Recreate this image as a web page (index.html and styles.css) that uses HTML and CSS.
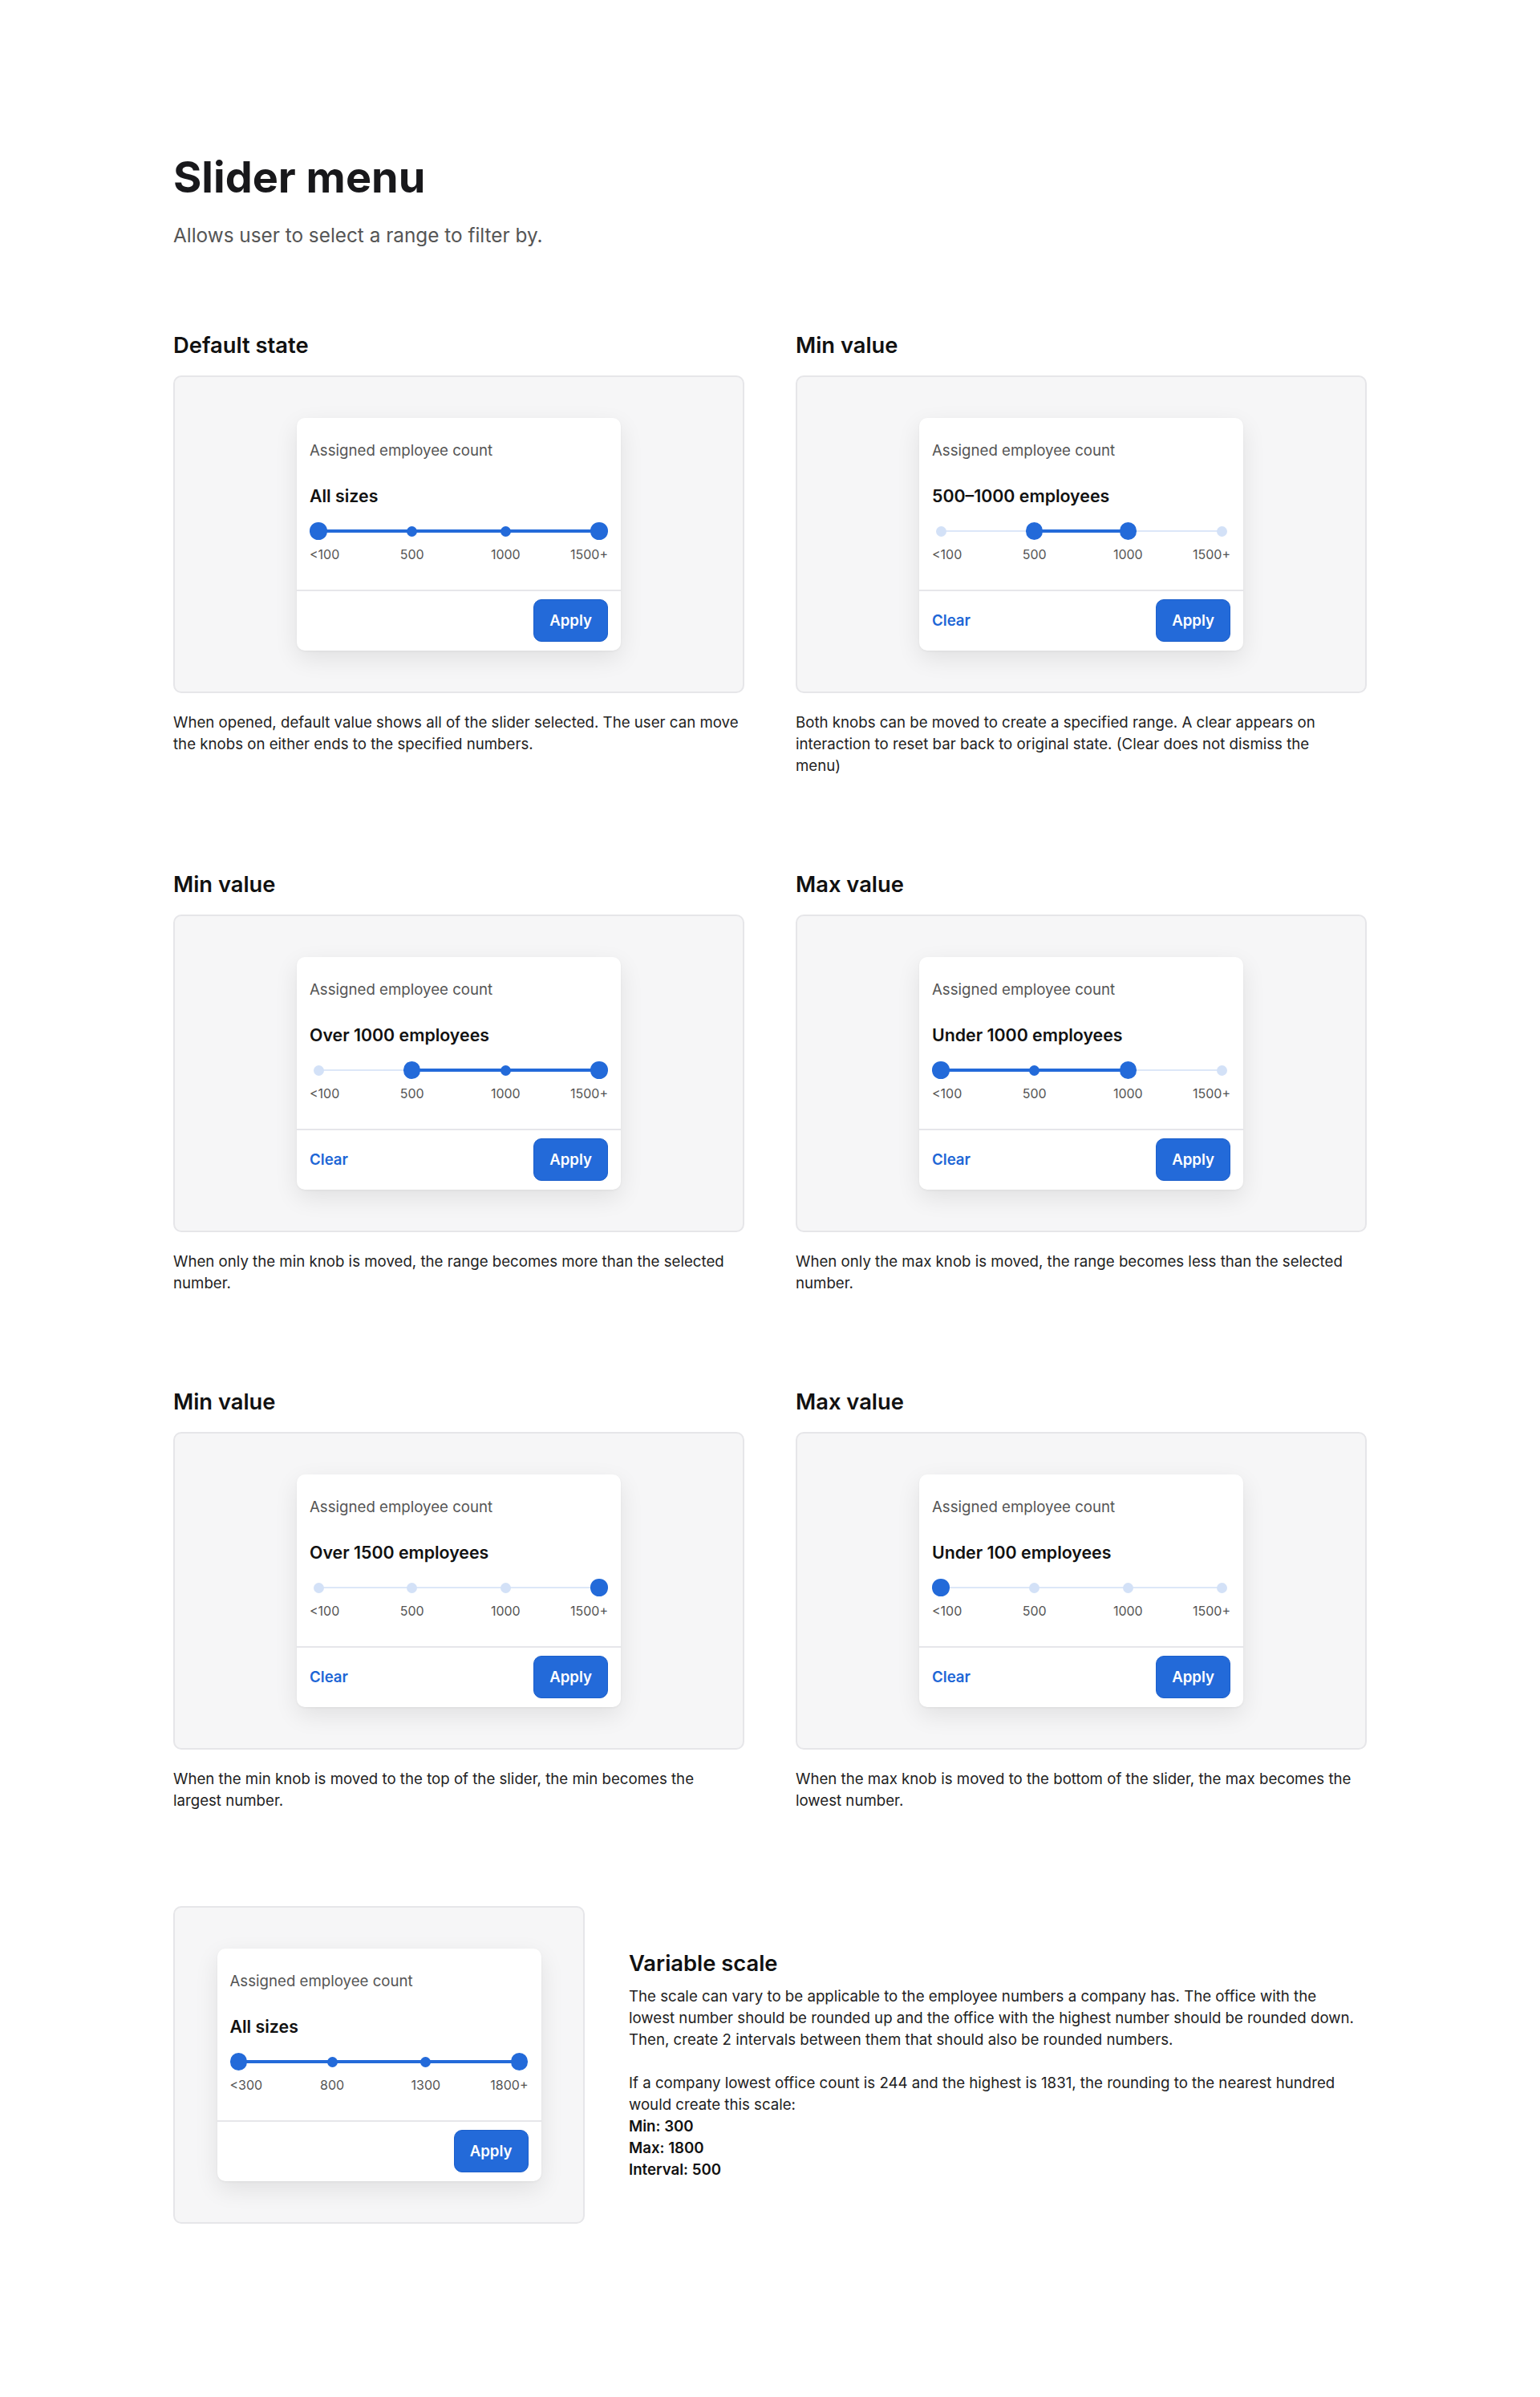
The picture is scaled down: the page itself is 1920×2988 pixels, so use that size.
FILE: index.html
```html
<!DOCTYPE html>
<html lang="en">
<head>
    <meta charset="UTF-8">
    <meta name="viewport" content="width=device-width, initial-scale=1.0">
    <title>Slider menu</title>
    <link rel="stylesheet" href="styles.css">
</head>
<body>
    <div class="page">
        <header class="intro">
            <h1>Slider menu</h1>
            <p class="subtitle">Allows user to select a range to filter by.</p>
        </header>

        <div class="states">
            <!-- Default -->
            <section class="state">
                <h2>Default state</h2>
                <div class="stage">
                    <div class="menu">
                        <div class="menu-body">
                            <p class="menu-label">Assigned employee count</p>
                            <p class="menu-value">All sizes</p>
                            <div class="slider">
                                <span class="stop"><i class="knob"></i></span>
                                <span class="seg on"></span>
                                <span class="stop"><i class="dot"></i></span>
                                <span class="seg on"></span>
                                <span class="stop"><i class="dot"></i></span>
                                <span class="seg on"></span>
                                <span class="stop"><i class="knob"></i></span>
                            </div>
                            <div class="ticks"><span>&lt;100</span><span>500</span><span>1000</span><span>1500+</span></div>
                        </div>
                        <div class="menu-foot">
                            <button class="apply">Apply</button>
                        </div>
                    </div>
                </div>
                <p class="note">When opened, default value shows all of the slider selected. The user can move the knobs on either ends to the specified numbers.</p>
            </section>

            <!-- Range -->
            <section class="state">
                <h2>Min value</h2>
                <div class="stage">
                    <div class="menu">
                        <div class="menu-body">
                            <p class="menu-label">Assigned employee count</p>
                            <p class="menu-value">500–1000 employees</p>
                            <div class="slider">
                                <span class="stop"><i class="dot off"></i></span>
                                <span class="seg"></span>
                                <span class="stop"><i class="knob"></i></span>
                                <span class="seg on"></span>
                                <span class="stop"><i class="knob"></i></span>
                                <span class="seg"></span>
                                <span class="stop"><i class="dot off"></i></span>
                            </div>
                            <div class="ticks"><span>&lt;100</span><span>500</span><span>1000</span><span>1500+</span></div>
                        </div>
                        <div class="menu-foot">
                            <a class="clear" href="#">Clear</a>
                            <button class="apply">Apply</button>
                        </div>
                    </div>
                </div>
                <p class="note note-narrow">Both knobs can be moved to create a specified range. A clear appears on interaction to reset bar back to original state. (Clear does not dismiss the menu)</p>
            </section>

            <!-- Over 1000 -->
            <section class="state">
                <h2>Min value</h2>
                <div class="stage">
                    <div class="menu">
                        <div class="menu-body">
                            <p class="menu-label">Assigned employee count</p>
                            <p class="menu-value">Over 1000 employees</p>
                            <div class="slider">
                                <span class="stop"><i class="dot off"></i></span>
                                <span class="seg"></span>
                                <span class="stop"><i class="knob"></i></span>
                                <span class="seg on"></span>
                                <span class="stop"><i class="dot"></i></span>
                                <span class="seg on"></span>
                                <span class="stop"><i class="knob"></i></span>
                            </div>
                            <div class="ticks"><span>&lt;100</span><span>500</span><span>1000</span><span>1500+</span></div>
                        </div>
                        <div class="menu-foot">
                            <a class="clear" href="#">Clear</a>
                            <button class="apply">Apply</button>
                        </div>
                    </div>
                </div>
                <p class="note">When only the min knob is moved, the range becomes more than the selected number.</p>
            </section>

            <!-- Under 1000 -->
            <section class="state">
                <h2>Max value</h2>
                <div class="stage">
                    <div class="menu">
                        <div class="menu-body">
                            <p class="menu-label">Assigned employee count</p>
                            <p class="menu-value">Under 1000 employees</p>
                            <div class="slider">
                                <span class="stop"><i class="knob"></i></span>
                                <span class="seg on"></span>
                                <span class="stop"><i class="dot"></i></span>
                                <span class="seg on"></span>
                                <span class="stop"><i class="knob"></i></span>
                                <span class="seg"></span>
                                <span class="stop"><i class="dot off"></i></span>
                            </div>
                            <div class="ticks"><span>&lt;100</span><span>500</span><span>1000</span><span>1500+</span></div>
                        </div>
                        <div class="menu-foot">
                            <a class="clear" href="#">Clear</a>
                            <button class="apply">Apply</button>
                        </div>
                    </div>
                </div>
                <p class="note">When only the max knob is moved, the range becomes less than the selected number.</p>
            </section>

            <!-- Over 1500 -->
            <section class="state">
                <h2>Min value</h2>
                <div class="stage">
                    <div class="menu">
                        <div class="menu-body">
                            <p class="menu-label">Assigned employee count</p>
                            <p class="menu-value">Over 1500 employees</p>
                            <div class="slider">
                                <span class="stop"><i class="dot off"></i></span>
                                <span class="seg"></span>
                                <span class="stop"><i class="dot off"></i></span>
                                <span class="seg"></span>
                                <span class="stop"><i class="dot off"></i></span>
                                <span class="seg"></span>
                                <span class="stop"><i class="knob"></i></span>
                            </div>
                            <div class="ticks"><span>&lt;100</span><span>500</span><span>1000</span><span>1500+</span></div>
                        </div>
                        <div class="menu-foot">
                            <a class="clear" href="#">Clear</a>
                            <button class="apply">Apply</button>
                        </div>
                    </div>
                </div>
                <p class="note">When the min knob is moved to the top of the slider, the min becomes the largest number.</p>
            </section>

            <!-- Under 100 -->
            <section class="state">
                <h2>Max value</h2>
                <div class="stage">
                    <div class="menu">
                        <div class="menu-body">
                            <p class="menu-label">Assigned employee count</p>
                            <p class="menu-value">Under 100 employees</p>
                            <div class="slider">
                                <span class="stop"><i class="knob"></i></span>
                                <span class="seg"></span>
                                <span class="stop"><i class="dot off"></i></span>
                                <span class="seg"></span>
                                <span class="stop"><i class="dot off"></i></span>
                                <span class="seg"></span>
                                <span class="stop"><i class="dot off"></i></span>
                            </div>
                            <div class="ticks"><span>&lt;100</span><span>500</span><span>1000</span><span>1500+</span></div>
                        </div>
                        <div class="menu-foot">
                            <a class="clear" href="#">Clear</a>
                            <button class="apply">Apply</button>
                        </div>
                    </div>
                </div>
                <p class="note">When the max knob is moved to the bottom of the slider, the max becomes the lowest number.</p>
            </section>
        </div>

        <section class="variable">
            <div class="stage stage-small">
                <div class="menu">
                    <div class="menu-body">
                        <p class="menu-label">Assigned employee count</p>
                        <p class="menu-value">All sizes</p>
                        <div class="slider">
                            <span class="stop"><i class="knob"></i></span>
                            <span class="seg on"></span>
                            <span class="stop"><i class="dot"></i></span>
                            <span class="seg on"></span>
                            <span class="stop"><i class="dot"></i></span>
                            <span class="seg on"></span>
                            <span class="stop"><i class="knob"></i></span>
                        </div>
                        <div class="ticks"><span>&lt;300</span><span>800</span><span>1300</span><span>1800+</span></div>
                    </div>
                    <div class="menu-foot">
                        <button class="apply">Apply</button>
                    </div>
                </div>
            </div>
            <div class="variable-text">
                <h2>Variable scale</h2>
                <p>The scale can vary to be applicable to the employee numbers a company has. The office with the lowest number should be rounded up and the office with the highest number should be rounded down. Then, create 2 intervals between them that should also be rounded numbers.</p>
                <p>If a company lowest office count is 244 and the highest is 1831, the rounding to the nearest hundred would create this scale:<br>
                <b>Min: 300</b><br>
                <b>Max: 1800</b><br>
                <b>Interval: 500</b></p>
            </div>
        </section>
    </div>
</body>
</html>
```

FILE: styles.css
```css
body {
    margin: 0;
    font-family: Inter, "Noto Sans", sans-serif;
    color: #18181b;
    background: #fff;
}
.page {
    padding: 190px 216px 218px;
}
h1 {
    margin: 0;
    font-size: 54px;
    line-height: 62px;
    font-weight: 700;
}
.subtitle {
    margin: 25px 0 0;
    font-size: 24.33px;
    line-height: 32px;
    color: #555;
}
.states {
    display: grid;
    grid-template-columns: 1fr 1fr;
    column-gap: 64px;
    row-gap: 117px;
    margin-top: 104px;
}
h2 {
    margin: 0;
    font-size: 27.33px;
    line-height: 36px;
    font-weight: 600;
    color: #111;
}
.stage {
    display: flex;
    align-items: center;
    justify-content: center;
    height: 392px;
    margin-top: 19px;
    background: #f6f6f7;
    border: 2px solid #e6e6e9;
    border-radius: 10px;
}
.note {
    margin: 23px 0 0;
    font-size: 18.67px;
    line-height: 27px;
    color: #222;
}
.note-narrow {
    max-width: 690px;
}

/* menu card */
.menu {
    width: 404px;
    background: #fff;
    border-radius: 10px;
    box-shadow: 0 10px 30px rgba(0, 0, 0, 0.09), 0 1px 3px rgba(0, 0, 0, 0.05);
}
.menu-body {
    padding: 28px 16px 33px;
}
.menu-label {
    margin: 0;
    font-size: 18.67px;
    line-height: 26px;
    color: #555;
}
.menu-value {
    margin: 29px 0 0;
    font-size: 21.33px;
    line-height: 28px;
    font-weight: 600;
    color: #111;
}
.slider {
    display: flex;
    align-items: center;
    height: 22px;
    margin-top: 19px;
}
.stop {
    flex: none;
    width: 22px;
    height: 22px;
    display: flex;
    align-items: center;
    justify-content: center;
    position: relative;
    z-index: 1;
}
.knob, .dot {
    display: block;
    border-radius: 50%;
    background: #236ad9;
}
.knob {
    width: 21.33px;
    height: 21.33px;
}
.dot {
    width: 13px;
    height: 13px;
}
.dot.off {
    background: #d3e1f7;
}
.seg {
    flex: 1;
    height: 2.67px;
    margin: 0 -11px;
    background: #dce7f8;
}
.seg.on {
    height: 4px;
    background: #236ad9;
}
.ticks {
    display: flex;
    justify-content: space-between;
    margin-top: 8px;
    font-size: 16px;
    line-height: 21px;
    color: #555;
}
.ticks span {
    width: 22px;
    display: flex;
    justify-content: center;
    white-space: nowrap;
}
.ticks span:first-child {
    justify-content: flex-start;
}
.ticks span:last-child {
    justify-content: flex-end;
}
.menu-foot {
    display: flex;
    align-items: center;
    justify-content: space-between;
    padding: 10px 16px 11px;
    border-top: 2px solid #e6e6ea;
}
.clear {
    font-size: 18.67px;
    font-weight: 600;
    color: #1d66d6;
    text-decoration: none;
}
.apply {
    margin-left: auto;
    height: 53px;
    padding: 0 19px;
    font-family: inherit;
    font-size: 18.67px;
    font-weight: 600;
    color: #fff;
    background: #236ad9;
    border: 1px solid #1c5fcb;
    border-radius: 10px;
}

/* variable scale */
.variable {
    display: flex;
    align-items: center;
    gap: 55px;
    margin-top: 118px;
}
.stage-small {
    flex: none;
    width: 509px;
    margin-top: 0;
}
.variable-text {
    max-width: 912px;
}
.variable-text h2 {
    margin-bottom: 9px;
}
.variable-text p {
    margin: 0;
    font-size: 18.67px;
    line-height: 27px;
    color: #222;
}
.variable-text p + p {
    margin-top: 27px;
}
.variable-text b {
    font-weight: 600;
    color: #111;
}
```
